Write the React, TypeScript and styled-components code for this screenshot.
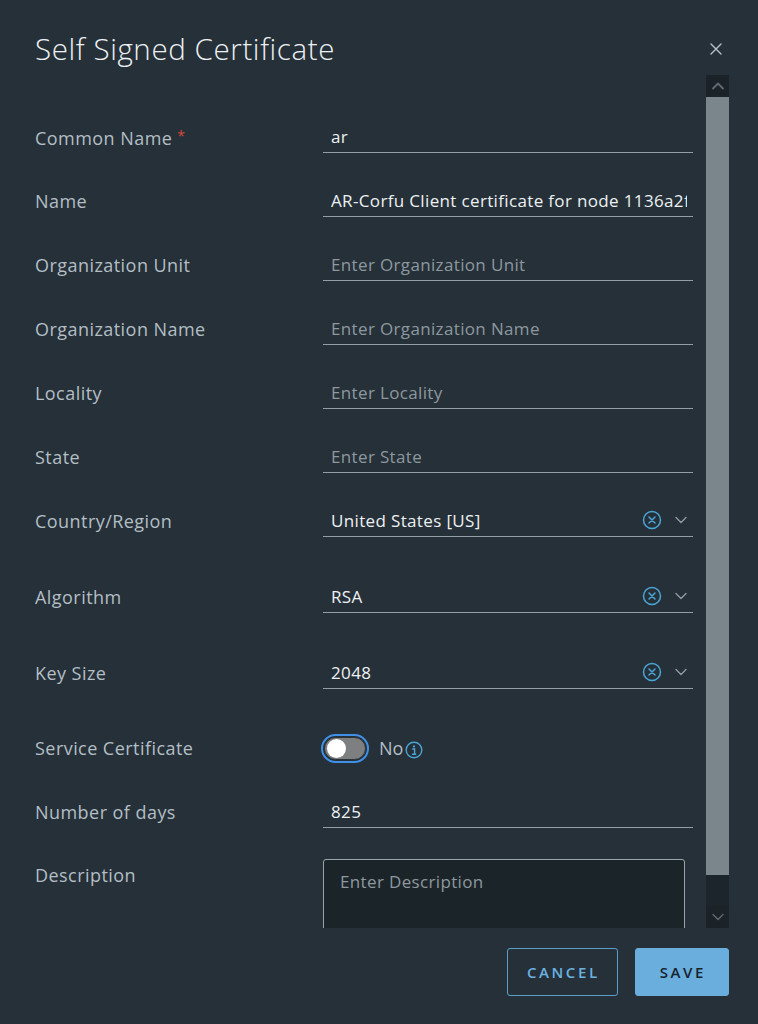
import React from 'react'
import styled, { createGlobalStyle } from 'styled-components'

const GlobalStyle = createGlobalStyle`
  html, body {
    margin: 0;
    padding: 0;
    background: #253038;
  }
  body {
    font-family: "Open Sans", "Liberation Sans", sans-serif;
  }
`

const Modal = styled.div`
  width: 758px;
  height: 1024px;
  box-sizing: border-box;
  padding: 0 29px 0 35px;
  background: #253038;
  display: flex;
  flex-direction: column;
  color: #e6eaec;
`

const Header = styled.div`
  height: 75px;
  box-sizing: border-box;
  padding-top: 22px;
  display: flex;
  align-items: center;
  justify-content: space-between;
`

const Title = styled.h1`
  margin: 0;
  font-size: 29.5px;
  font-weight: 300;
  color: #eef1f3;
  letter-spacing: 0.6px;
`

const CloseButton = styled.button`
  width: 24px;
  height: 24px;
  padding: 0;
  margin-right: 1px;
  border: none;
  background: transparent;
  display: flex;
  align-items: center;
  justify-content: center;
  cursor: pointer;
`

const Body = styled.div`
  height: 853px;
  display: flex;
  gap: 13px;
`

const Form = styled.div`
  flex: 1;
  overflow: hidden;
  padding-top: 45px;
  display: flex;
  flex-direction: column;
  gap: 31px;
`

const Row = styled.div<{ $extra?: number; $top?: boolean }>`
  display: grid;
  grid-template-columns: 288px 370px;
  align-items: ${({ $top }) => ($top ? 'start' : 'center')};
  padding-bottom: ${({ $extra }) => $extra || 0}px;
`

const Label = styled.label<{ $top?: boolean }>`
  font-size: 18px;
  letter-spacing: 0.45px;
  color: #b3bec5;
  line-height: 20px;
  padding-top: ${({ $top }) => ($top ? '6px' : '0')};
`

const Required = styled.span`
  color: #d64a37;
  margin-left: 5px;
  font-size: 14px;
  vertical-align: 4px;
`

const TextInput = styled.input`
  width: 100%;
  height: 33px;
  box-sizing: border-box;
  padding: 0 6px 0 8px;
  border: none;
  border-bottom: 1px solid #939fa6;
  background: transparent;
  font-family: "Open Sans", "Liberation Sans", sans-serif;
  font-size: 17px;
  letter-spacing: 0.35px;
  color: #eef1f3;
  outline: none;

  &::placeholder {
    color: #8e989f;
  }
`

const SelectBox = styled.div`
  height: 33px;
  box-sizing: border-box;
  padding: 0 6px 0 8px;
  border-bottom: 1px solid #939fa6;
  display: flex;
  align-items: center;
  font-size: 17px;
  letter-spacing: 0.35px;
  color: #eef1f3;
`

const SelectValue = styled.span`
  flex: 1;
`

const SelectIcons = styled.div`
  display: flex;
  align-items: center;
  gap: 13px;
  margin-right: 0;
`

const ToggleWrap = styled.div`
  display: flex;
  align-items: center;
  height: 32px;
`

const ToggleRing = styled.div`
  width: 48px;
  height: 29px;
  box-sizing: border-box;
  margin-left: -2px;
  border: 2px solid #3f90e6;
  border-radius: 15px;
  padding: 1px;
`

const ToggleTrack = styled.div`
  height: 100%;
  border-radius: 13px;
  background: #7d7f80;
  border: 1px solid #2c3438;
  box-sizing: border-box;
  display: flex;
  align-items: center;
  padding-left: 2px;
`

const Knob = styled.div`
  width: 19px;
  height: 19px;
  border-radius: 50%;
  background: #ffffff;
`

const ToggleText = styled.span`
  font-size: 18px;
  color: #b3bec5;
  margin-left: 10px;
  margin-right: 2px;
`

const TextArea = styled.textarea`
  width: 362px;
  height: 90px;
  box-sizing: border-box;
  padding: 10px 16px;
  border: 1px solid #9aa5ad;
  border-radius: 3px;
  background: #1b2429;
  font-family: "Open Sans", "Liberation Sans", sans-serif;
  font-size: 17px;
  letter-spacing: 0.35px;
  color: #eef1f3;
  resize: none;
  outline: none;

  &::placeholder {
    color: #8e989f;
  }
`

const Scrollbar = styled.div`
  width: 23px;
  display: flex;
  flex-direction: column;
  background: #1c252b;
`

const ScrollArrow = styled.div`
  height: 22px;
  display: flex;
  align-items: center;
  justify-content: center;
  background: #1b2328;
`

const ScrollThumb = styled.div`
  height: 778px;
  background: #7b858c;
`

const ScrollTrack = styled.div`
  flex: 1;
`

const Footer = styled.div`
  height: 96px;
  box-sizing: border-box;
  padding-top: 20px;
  display: flex;
  justify-content: flex-end;
  gap: 17px;
`

const Button = styled.button<{ $primary?: boolean }>`
  height: 48px;
  box-sizing: border-box;
  padding: 0 ${({ $primary }) => ($primary ? '22px' : '17px')} 0
    ${({ $primary }) => ($primary ? '24px' : '19px')};
  border-radius: 3px;
  border: 1px solid ${({ $primary }) => ($primary ? '#69aedd' : '#5a9fcc')};
  background: ${({ $primary }) => ($primary ? '#69aedd' : 'transparent')};
  color: ${({ $primary }) => ($primary ? '#17232b' : '#6cb2e0')};
  font-family: "Open Sans", "Liberation Sans", sans-serif;
  font-size: 15px;
  font-weight: 600;
  letter-spacing: 2.6px;
  cursor: pointer;
`

const ClearIcon = () => (
  <svg width="20" height="20" viewBox="0 0 20 20" fill="none">
    <circle cx="10" cy="10" r="8.5" stroke="#4ba5d6" strokeWidth="1.5" />
    <path d="M7 7l6 6M13 7l-6 6" stroke="#4ba5d6" strokeWidth="1.5" strokeLinecap="round" />
  </svg>
)

const ChevronDown = ({ color = '#8f9aa1' }: { color?: string }) => (
  <svg width="12" height="8" viewBox="0 0 12 8" fill="none">
    <path d="M1 1.5l5 5 5-5" stroke={color} strokeWidth="1.4" strokeLinecap="round" strokeLinejoin="round" />
  </svg>
)

const ChevronUp = () => (
  <svg width="12" height="8" viewBox="0 0 12 8" fill="none">
    <path d="M1 6.5l5-5 5 5" stroke="#5f6a71" strokeWidth="1.8" strokeLinecap="round" strokeLinejoin="round" />
  </svg>
)

const InfoIcon = () => (
  <svg width="18" height="18" viewBox="0 0 18 18" fill="none" style={{ marginTop: 3 }}>
    <circle cx="9" cy="9" r="7.8" stroke="#4ba5d6" strokeWidth="1.4" />
    <circle cx="9" cy="5.4" r="1.1" fill="#4ba5d6" />
    <path d="M7.2 8h2.4v5M7 13.2h4.2" stroke="#4ba5d6" strokeWidth="1.4" />
  </svg>
)

const CloseIcon = () => (
  <svg width="14" height="14" viewBox="0 0 14 14" fill="none">
    <path d="M2 2l10 10M12 2L2 12" stroke="#b9c2c8" strokeWidth="1.4" strokeLinecap="round" />
  </svg>
)

const textFields = [
  { label: 'Name', value: 'AR-Corfu Client certificate for node 1136a2f4-8c9e-4d3b', placeholder: 'Enter Name' },
  { label: 'Organization Unit', value: '', placeholder: 'Enter Organization Unit' },
  { label: 'Organization Name', value: '', placeholder: 'Enter Organization Name' },
  { label: 'Locality', value: '', placeholder: 'Enter Locality' },
  { label: 'State', value: '', placeholder: 'Enter State' },
]

const selectFields = [
  { label: 'Country/Region', value: 'United States [US]' },
  { label: 'Algorithm', value: 'RSA' },
  { label: 'Key Size', value: '2048' },
]

export default function App() {
  return (
    <>
      <GlobalStyle />
      <Modal>
        <Header>
          <Title>Self Signed Certificate</Title>
          <CloseButton aria-label="Close">
            <CloseIcon />
          </CloseButton>
        </Header>
        <Body>
          <Form>
            <Row>
              <Label>
                Common Name<Required>*</Required>
              </Label>
              <TextInput defaultValue="ar" />
            </Row>
            {textFields.map((f) => (
              <Row key={f.label}>
                <Label>{f.label}</Label>
                <TextInput defaultValue={f.value} placeholder={f.placeholder} />
              </Row>
            ))}
            {selectFields.map((f) => (
              <Row key={f.label} $extra={12}>
                <Label>{f.label}</Label>
                <SelectBox>
                  <SelectValue>{f.value}</SelectValue>
                  <SelectIcons>
                    <ClearIcon />
                    <ChevronDown />
                  </SelectIcons>
                </SelectBox>
              </Row>
            ))}
            <Row>
              <Label>Service Certificate</Label>
              <ToggleWrap>
                <ToggleRing>
                  <ToggleTrack>
                    <Knob />
                  </ToggleTrack>
                </ToggleRing>
                <ToggleText>No</ToggleText>
                <InfoIcon />
              </ToggleWrap>
            </Row>
            <Row>
              <Label>Number of days</Label>
              <TextInput defaultValue="825" />
            </Row>
            <Row $top>
              <Label $top>Description</Label>
              <TextArea placeholder="Enter Description" />
            </Row>
          </Form>
          <Scrollbar>
            <ScrollArrow>
              <ChevronUp />
            </ScrollArrow>
            <ScrollThumb />
            <ScrollTrack />
            <ScrollArrow>
              <ChevronDown color="#5f6a71" />
            </ScrollArrow>
          </Scrollbar>
        </Body>
        <Footer>
          <Button>CANCEL</Button>
          <Button $primary>SAVE</Button>
        </Footer>
      </Modal>
    </>
  )
}
